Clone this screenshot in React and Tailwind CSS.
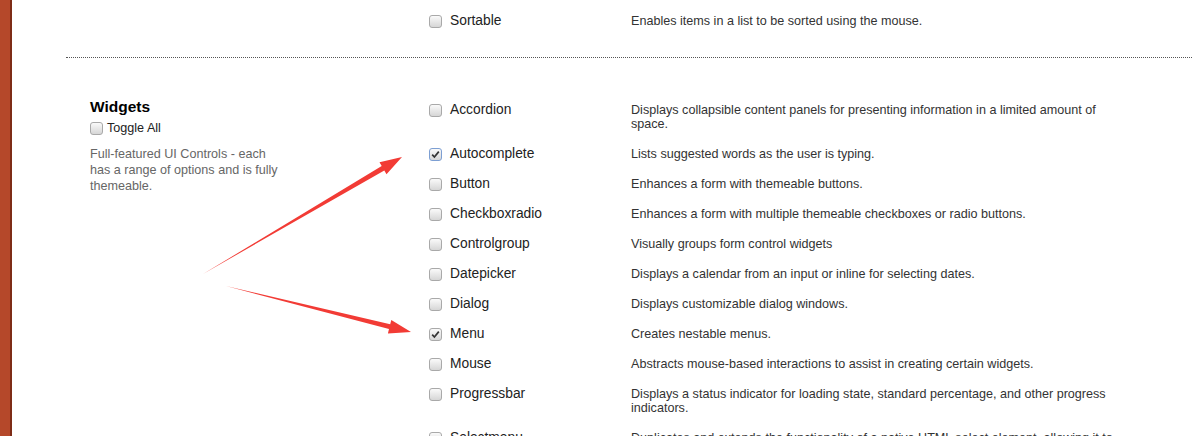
import React from 'react';

const widgets = [
    { name: 'Accordion', desc: 'Displays collapsible content panels for presenting information in a limited amount of space.' },
    { name: 'Autocomplete', desc: 'Lists suggested words as the user is typing.', checked: true, focused: true },
    { name: 'Button', desc: 'Enhances a form with themeable buttons.' },
    { name: 'Checkboxradio', desc: 'Enhances a form with multiple themeable checkboxes or radio buttons.' },
    { name: 'Controlgroup', desc: 'Visually groups form control widgets' },
    { name: 'Datepicker', desc: 'Displays a calendar from an input or inline for selecting dates.' },
    { name: 'Dialog', desc: 'Displays customizable dialog windows.' },
    { name: 'Menu', desc: 'Creates nestable menus.', checked: true },
    { name: 'Mouse', desc: 'Abstracts mouse-based interactions to assist in creating certain widgets.' },
    { name: 'Progressbar', desc: 'Displays a status indicator for loading state, standard percentage, and other progress indicators.' },
    { name: 'Selectmenu', desc: 'Duplicates and extends the functionality of a native HTML select element, allowing it to be customized in behavior and appearance far beyond the limitations of a native select.' },
];

const Box = ({ checked, focused }) => (
    <span
        className={`flex w-[13px] h-[13px] shrink-0 items-center justify-center rounded-[3px] border bg-gradient-to-b from-[#fafafa] to-[#d6d6d6] ${focused ? 'border-[#7d9fd3]' : 'border-[#a9a9a9]'}`}
    >
        {checked && (
            <svg width="9" height="9" viewBox="0 0 9 9">
                <path d="M1.2 4.6 L3.4 7 L7.8 1.6" fill="none" stroke="#333" strokeWidth="1.7" />
            </svg>
        )}
    </span>
);

const Row = ({ name, desc, checked, focused }) => (
    <div className="flex py-[8px] leading-[14px]">
        <div className="flex w-[202px] shrink-0 items-start gap-[8px]">
            <div className="flex pt-[1px]"><Box checked={checked} focused={focused} /></div>
            <span className="text-[13.8px] text-[#222]">{name}</span>
        </div>
        <p className="w-[495px] text-[12.6px] text-[#333]">{desc}</p>
    </div>
);

const App = () => {
    return (
        <div className="relative flex h-[436px] w-[1192px] overflow-hidden bg-white font-['Liberation_Sans',Arial,sans-serif]">
            <div className="w-[12px] shrink-0 border-r-[2px] border-[#7e2c17] bg-[#b5482a]" />

            <div className="flex flex-1 flex-col pl-[54px]">
                <div className="pl-[363px] pt-[6px]">
                    <Row name="Sortable" desc="Enables items in a list to be sorted using the mouse." />
                </div>

                <div className="mt-[21px] border-t border-dotted border-[#555]" />

                <div className="flex pt-[37px]">
                    <div className="w-[363px] shrink-0 pl-[24px] pt-[4px]">
                        <h2 className="text-[15.5px] font-bold leading-[16px] text-black">Widgets</h2>
                        <label className="mt-[6px] flex items-center gap-[4px] text-[12.6px] leading-[14px] text-[#222]">
                            <Box />
                            Toggle All
                        </label>
                        <p className="mt-[11px] w-[192px] text-[12.6px] leading-[16px] text-[#666]">
                            Full-featured UI Controls - each has a range of options and is fully themeable.
                        </p>
                    </div>
                    <div className="flex flex-col">
                        {widgets.map((w) => (
                            <Row key={w.name} {...w} />
                        ))}
                    </div>
                </div>
            </div>

            <svg className="pointer-events-none absolute left-0 top-0" width="1192" height="436">
                <polygon
                    points="203,274 381.7,166 379.5,162.2 402,157 386.5,174.2 384.3,170.4"
                    fill="#f23b35"
                />
                <polygon
                    points="226,286 390.2,324.3 391.3,319.9 411,332 387.9,333.5 389,329.1"
                    fill="#f23b35"
                />
            </svg>
        </div>
    );
};

export default App;
